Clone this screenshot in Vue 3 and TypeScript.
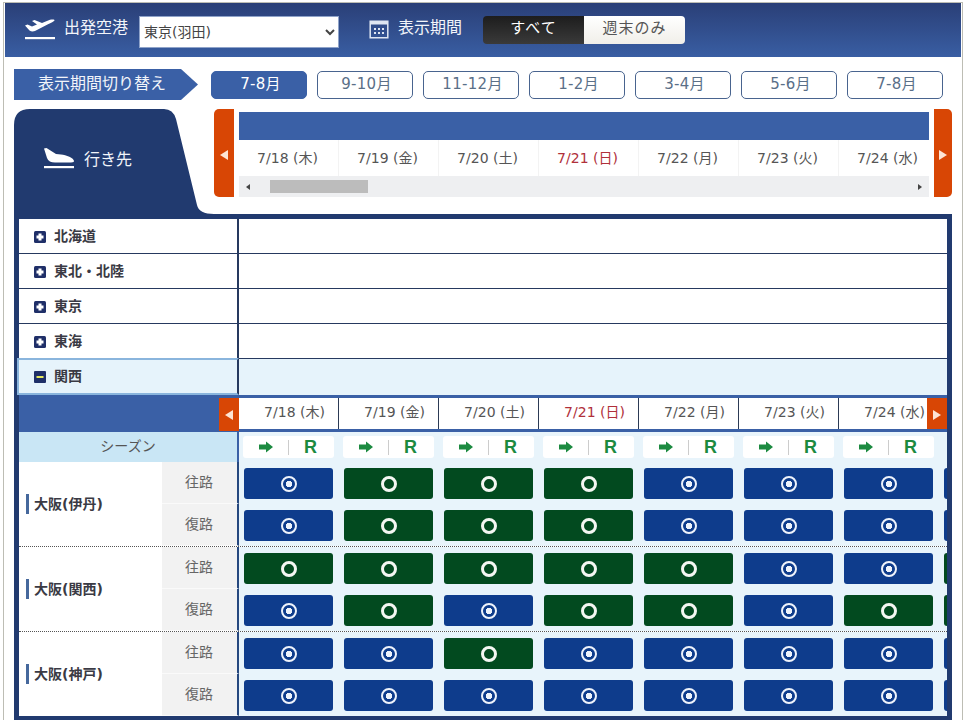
<script setup lang="ts">
type Kind = 'b' | 'g'
const dates = [
  { t: '7/18 (木)' }, { t: '7/19 (金)' }, { t: '7/20 (土)' }, { t: '7/21 (日)', sun: true },
  { t: '7/22 (月)' }, { t: '7/23 (火)' }, { t: '7/24 (水)' },
]
const periods = ['7-8月', '9-10月', '11-12月', '1-2月', '3-4月', '5-6月', '7-8月']
const regions = ['北海道', '東北・北陸', '東京', '東海']
const groups: { name: string; out: Kind[]; back: Kind[] }[] = [
  { name: '大阪(伊丹)', out: ['b','g','g','g','b','b','b','b'], back: ['b','g','g','g','b','b','b','b'] },
  { name: '大阪(関西)', out: ['g','g','g','g','g','b','b','g'], back: ['b','g','b','g','g','b','g','g'] },
  { name: '大阪(神戸)', out: ['b','b','g','b','b','b','b','b'], back: ['b','b','b','b','b','b','b','b'] },
]
</script>

<template>
  <div class="page">
    <header class="top">
      <svg class="plane" width="30" height="21" viewBox="0 0 30 21">
        <path fill="#fff" d="M0 6.5 L2.5 5.5 L7 7.5 L12 5.5 L7 2 L9.5 1 L17 4 L25 .8 C28 0 30 .6 29.5 1.6 C29 2.6 26 4 23 5.2 L10 12 C8 12.8 6 12.5 4.5 11.6 Z" />
        <rect y="18" width="30" height="2.2" fill="#fff" />
      </svg>
      <span class="top-label first">出発空港</span>
      <select class="airport"><option>東京(羽田)</option></select>
      <svg class="cal" width="20" height="20" viewBox="0 0 20 20">
        <path fill="none" stroke="#dfe6f2" stroke-width="1.5" d="M1.2 2.2h17.6v16.6H1.2z" />
        <rect x="1" y="2" width="18" height="3.5" fill="#dfe6f2" />
        <path fill="#dfe6f2" d="M5 9h2v2H5zM9 9h2v2H9zM13 9h2v2h-2zM5 13h2v2H5zM9 13h2v2H9zM13 13h2v2h-2z" />
      </svg>
      <span class="top-label second">表示期間</span>
      <div class="toggle">
        <span class="tog on">すべて</span>
        <span class="tog off">週末のみ</span>
      </div>
    </header>

    <div class="switcher">
      <div class="sw-label">表示期間切り替え</div>
      <div class="periods">
        <span v-for="(p, i) in periods" :key="i" class="period" :class="{ active: i === 0 }">{{ p }}</span>
      </div>
    </div>

    <div class="heading">
      <div class="tab">
        <svg width="30" height="21" viewBox="0 0 30 21">
          <path fill="#fff" d="M0 .5 L2.5 0 L12 6 L17 6.5 C22 7 30 10 30 13 C30 14.5 27 14.6 24 14.6 L11 14.6 C7 14.6 4 13 3 10 Z" />
          <rect y="18" width="30" height="2.2" fill="#fff" />
        </svg>
        <span class="tab-label">行き先</span>
      </div>
      <button class="side-btn left"><i class="tri l"></i></button>
      <div class="scroller">
        <div class="scroll-bar"></div>
        <div class="scroll-dates">
          <span v-for="d in dates" :key="d.t" class="sd" :class="{ sun: d.sun }">{{ d.t }}</span>
        </div>
        <div class="scroll-track">
          <i class="mini l"></i>
          <div class="thumb"></div>
          <i class="mini r"></i>
        </div>
      </div>
      <button class="side-btn right"><i class="tri r"></i></button>
    </div>

    <div class="board">
      <div v-for="r in regions" :key="r" class="region">
        <div class="region-name">
          <svg class="pm" width="12" height="12" viewBox="0 0 12 12">
            <rect width="12" height="12" rx="1.5" fill="#1f2f68" />
            <path fill="#fff" d="M4.5 2.5h3V4.5h2v3h-2v2h-3v-2h-2v-3h2z" />
          </svg>
          <b>{{ r }}</b>
        </div>
        <div class="region-rest"></div>
      </div>
      <div class="region open">
        <div class="region-name">
          <svg class="pm" width="12" height="12" viewBox="0 0 12 12">
            <rect width="12" height="12" rx="1" fill="#1f2f68" />
            <rect x="2.5" y="5" width="7" height="2" fill="#e6e85c" />
          </svg>
          <b>関西</b>
        </div>
        <div class="region-rest"></div>
      </div>

      <div class="date-row">
        <div class="date-lead"><button class="mini-side"><i class="tri l"></i></button></div>
        <div class="date-cells">
          <span v-for="d in dates" :key="d.t" class="dc" :class="{ sun: d.sun }">{{ d.t }}</span>
          <button class="mini-side end"><i class="tri r"></i></button>
        </div>
      </div>

      <div class="season-row">
        <div class="season-lead">シーズン</div>
        <div class="season-cells">
          <span v-for="d in dates" :key="d.t" class="pill">
            <svg width="14" height="12" viewBox="0 0 14 12"><path fill="#1c8a40" d="M0 3.6h7V.5L14 6l-7 5.5V8.4H0z" /></svg>
            <em></em>
            <strong>R</strong>
          </span>
        </div>
      </div>

      <div v-for="g in groups" :key="g.name" class="group">
        <div class="g-name"><span>{{ g.name }}</span></div>
        <div class="g-legs">
          <div class="leg">
            <div class="leg-name">往路</div>
            <div class="leg-cells">
              <span v-for="(k, i) in g.out" :key="i" class="seat" :class="k"><i></i></span>
            </div>
          </div>
          <div class="leg">
            <div class="leg-name">復路</div>
            <div class="leg-cells">
              <span v-for="(k, i) in g.back" :key="i" class="seat" :class="k"><i></i></span>
            </div>
          </div>
        </div>
      </div>
    </div>
  </div>
</template>

<style>
html, body { margin: 0; background: #fff; overflow: hidden; }
</style>

<style scoped>
.page {
  width: 960px;
  height: 718px;
  margin: 2px 0 0 3px;
  padding-left: 1px;
  border: 1px solid #bdbdb4;
  border-bottom: 0;
  box-sizing: border-box;
  overflow: hidden;
  font-family: "DejaVu Sans", "Noto Sans CJK JP", sans-serif;
  color: #444;
}
.top {
  height: 54px;
  width: 956px;
  display: flex;
  align-items: center;
  box-sizing: border-box;
  padding-left: 20px;
  background: linear-gradient(#2a3f77, #395ea3);
  color: #fff;
}
.plane { flex: none; margin-top: -2px; }
.top-label { font-size: 16px; line-height: 20px; margin-top: -4px; color: #f2f5fa; }
.first { margin-left: 9px; }
.second { margin-left: 9px; }
.airport {
  width: 200px;
  height: 32px;
  margin: 4px 0 0 11px;
  font: 14px "DejaVu Sans", "Noto Sans CJK JP", sans-serif;
  color: #444;
  background: #fff;
  border: 1px solid #8fa3c9;
  padding: 0;
}
.cal { margin: -2px 0 0 30px; flex: none; }
.toggle { display: flex; margin-left: 21px; }
.tog {
  width: 101px;
  height: 28px;
  box-sizing: border-box;
  text-align: center;
  font-size: 15px;
  line-height: 25px;
  letter-spacing: 1px;
}
.on { background: linear-gradient(#1d1d1d, #3a3a3a); color: #fff; border-radius: 4px 0 0 4px; }
.off { background: linear-gradient(#fff, #f1efe9); color: #555; border-radius: 0 4px 4px 0; }

.switcher {
  display: flex;
  align-items: center;
  height: 31px;
  margin: 12px 0 0 9px;
}
.sw-label {
  width: 184px;
  height: 31px;
  box-sizing: border-box;
  padding: 0 0 2px 24px;
  background: #3a60a6;
  clip-path: polygon(0 0, 167px 0, 100% 50%, 167px 100%, 0 100%);
  color: #f2f5fa;
  font-size: 16px;
  line-height: 29px;
}
.periods { display: flex; gap: 10px; margin-left: 13px; }
.period {
  width: 96px;
  height: 28px;
  box-sizing: border-box;
  border: 1px solid #49648f;
  border-radius: 5px;
  padding-left: 3px;
  text-align: center;
  font-size: 15px;
  letter-spacing: .3px;
  line-height: 24px;
  color: #5a6f88;
}
.period.active { background: #3a60a6; border-color: #3a60a6; color: #fff; }

.heading {
  display: flex;
  height: 105px;
  margin: 9px 0 0 9px;
}
.tab {
  width: 200px;
  height: 105px;
  flex: none;
  display: flex;
  align-items: center;
  box-sizing: border-box;
  padding: 0 0 6px 30px;
  gap: 10px;
  background: #213a6f;
  clip-path: path('M0 105 L0 16 Q0 0 16 0 L150 0 Q159 0 162 10 L183 96 Q185 105 200 105 Z');
  color: #f2f5fa;
  font-size: 16px;
}
.tab-label { margin-top: -2px; }
.side-btn {
  width: 20px;
  height: 88px;
  flex: none;
  padding: 0;
  border: 0;
  background: #d84605;
  display: flex;
  align-items: center;
  justify-content: center;
}
.side-btn .tri { margin-top: 4px; }
.side-btn.left { border-radius: 5px 0 0 5px; }
.side-btn.right { width: 18px; margin-left: 5px; border-radius: 0 5px 5px 0; }
.tri { display: block; width: 0; height: 0; border-style: solid; }
.tri.l { border-width: 5px 8px 5px 0; border-color: transparent #fde5d5 transparent transparent; }
.tri.r { border-width: 5px 0 5px 8px; border-color: transparent transparent transparent #fde5d5; }
.scroller { width: 690px; margin-left: 5px; flex: none; height: 88px; padding-top: 3px; box-sizing: border-box; }
.scroll-bar { height: 28px; background: #3a60a6; }
.scroll-dates { display: flex; height: 36px; }
.sd {
  width: 100px;
  box-sizing: border-box;
  flex: none;
  text-align: center;
  font-size: 14px;
  line-height: 36px;
  color: #555;
  border-right: 1px solid #f3f3f3;
  padding-right: 2px;
  white-space: nowrap;
}
.sd.sun { color: #b0303a; }
.scroll-track {
  height: 21px;
  background: #eeeff1;
  display: flex;
  align-items: center;
  padding: 0 7px;
  box-sizing: border-box;
}
.thumb { width: 98px; height: 13px; background: #bcbcbc; margin-left: 20px; }
.mini { display: block; width: 0; height: 0; border-style: solid; }
.mini.l { border-width: 3.5px 4px 3.5px 0; border-color: transparent #444 transparent transparent; }
.mini.r { border-width: 3.5px 0 3.5px 4px; border-color: transparent transparent transparent #444; margin-left: auto; }

.board {
  width: 938px;
  margin-left: 9px;
  border: solid #213a6f;
  border-width: 5px 5px 4px;
  box-sizing: border-box;
  background: #fff;
}
.region { display: flex; height: 35px; border-bottom: 1px solid #26395f; box-sizing: border-box; }
.region-name {
  width: 220px;
  flex: none;
  border-right: 2px solid #26395f;
  display: flex;
  align-items: center;
  padding-left: 15px;
  box-sizing: border-box;
  gap: 8px;
  font-size: 14px;
  color: #3a3a44;
}
.pm { margin-top: 2px; }
.region-name b { font-weight: 700; margin-top: -2px; }
.region-rest { flex: 1; }
.region.open { height: 36px; background: #e6f3fb; border-bottom: 0; }
.region.open .region-name {
  width: 222px;
  height: 37px;
  margin: -1px 0 0 -2px;
  padding-bottom: 2px;
  background: #e6f3fb;
  border: 2px solid #8ab5dd;
  border-right-color: #26395f;
  padding-left: 15px;
}

.date-row {
  display: flex;
  height: 37px;
  background: #3a60a6;
  padding-top: 3px;
  box-sizing: border-box;
}
.date-lead { width: 220px; flex: none; }
.mini-side {
  width: 20px;
  height: 33px;
  padding: 0;
  border: 0;
  background: #d84605;
  margin-left: 200px;
  display: flex;
  align-items: center;
  justify-content: center;
}
.date-cells { display: flex; flex: 1; height: 31px; overflow: hidden; position: relative; background: #fff; }
.dc {
  width: 100px;
  flex: none;
  box-sizing: border-box;
  border-right: 1px solid #2c3a55;
  text-align: center;
  font-size: 14px;
  line-height: 28px;
  color: #555;
  padding-left: 12px;
  white-space: nowrap;
}
.dc.sun { color: #b0303a; }
.mini-side.end { position: absolute; right: 0; top: 0; margin: 0; }

.season-row { display: flex; height: 30px; }
.season-lead {
  width: 220px;
  flex: none;
  box-sizing: border-box;
  border-right: 2px solid #3a60a6;
  background: #c9e6f5;
  text-align: center;
  font-size: 14px;
  line-height: 28px;
  color: #555;
}
.season-cells {
  flex: 1;
  display: flex;
  background: #e8f4fb;
  overflow: hidden;
  padding: 4px 0 0 4px;
  gap: 9px;
}
.pill {
  width: 91px;
  height: 22px;
  flex: none;
  background: #fff;
  border-radius: 3px;
  display: flex;
  align-items: center;
}
.pill svg { margin-left: 16px; flex: none; }
.pill em { width: 1px; height: 15px; background: #ccc; margin-left: 15px; }
.pill strong { margin-left: 15px; font: 700 18px/22px "Liberation Sans", sans-serif; color: #1c8a40; }

.group { display: flex; height: 85px; border-bottom: 1px dotted #555; box-sizing: border-box; }
.group:last-child { height: 84px; border-bottom: 0; }
.g-name {
  width: 143px;
  flex: none;
  display: flex;
  align-items: center;
  padding: 0 0 0 7px;
  box-sizing: border-box;
  font-size: 14px;
  font-weight: 700;
  color: #3a3a44;
}
.g-name span { border-left: 3px solid #46689c; padding-left: 5px; line-height: 20px; }
.g-legs { flex: 1; min-width: 0; }
.leg { display: flex; height: 42px; }
.leg-name {
  width: 77px;
  flex: none;
  box-sizing: border-box;
  background: #f2f2f2;
  border-right: 2px solid #26487f;
  border-bottom: 1px solid #fafafa;
  text-align: center;
  padding-right: 1px;
  font-size: 14px;
  line-height: 41px;
  color: #666;
}
.leg-cells {
  flex: 1;
  display: flex;
  gap: 11px;
  padding: 6px 0 0 5px;
  background: #e8f4fb;
  overflow: hidden;
}
.seat {
  width: 89px;
  height: 31px;
  flex: none;
  border-radius: 3px;
  display: flex;
  align-items: center;
  justify-content: center;
}
.seat.b { background: #0e3c8c; }
.seat.g { background: #024a1f; }
.seat i { display: block; box-sizing: border-box; width: 16px; height: 16px; border-radius: 50%; }
.seat.b i { border: 2px solid #eef3fb; background: radial-gradient(circle, #eef3fb 0 3px, transparent 3.4px); }
.seat.g i { border: 3.5px solid #f4f7f2; }
</style>
